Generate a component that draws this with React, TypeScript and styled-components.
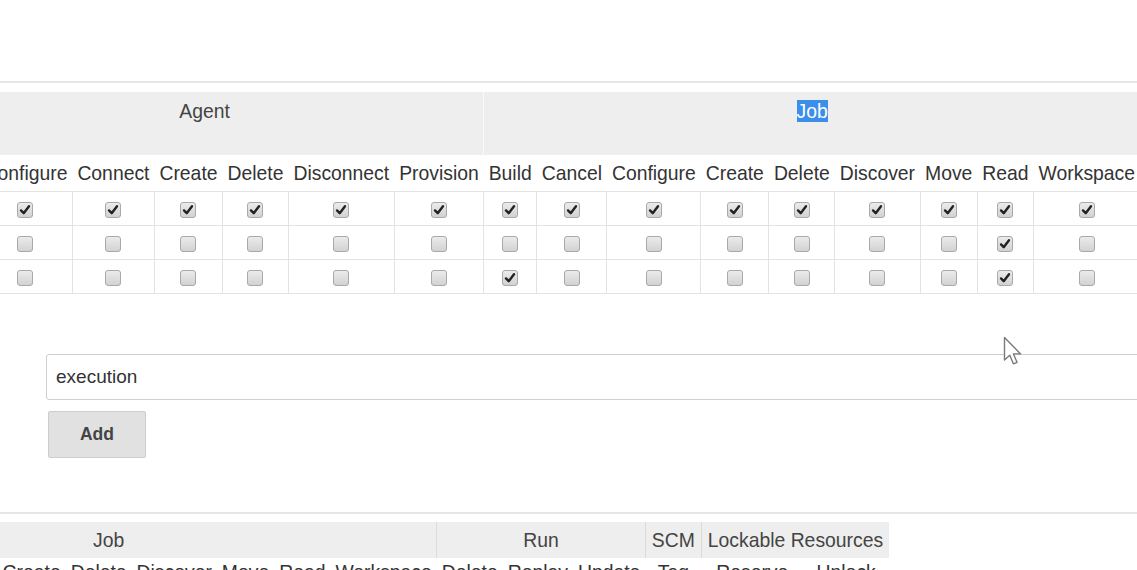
import React from 'react';
import styled, { createGlobalStyle } from 'styled-components';

const GlobalStyle = createGlobalStyle`
  html, body { margin: 0; padding: 0; background: #ffffff; }
  body {
    width: 1137px;
    height: 570px;
    overflow: hidden;
    font-family: "Liberation Sans", Arial, Helvetica, sans-serif;
    color: #333333;
  }
`;

const Page = styled.div`
  position: relative;
  width: 1137px;
  height: 570px;
  overflow: hidden;
  padding-top: 81px;
  box-sizing: border-box;
`;

const Section = styled.section<{ $pt: number }>`
  border-top: 2px solid #e6e6e6;
  padding-top: ${p => p.$pt}px;
`;

const Matrix = styled.table<{ $shift: number }>`
  border-collapse: collapse;
  margin-left: ${p => -p.$shift}px;
  font-size: 19.35px;
  line-height: 24px;
`;

const GroupCell = styled.th<{ $h: number; $top?: boolean; $sep: string }>`
  background: #eeeeee;
  height: ${p => p.$h}px;
  font-weight: normal;
  color: #444444;
  text-align: center;
  vertical-align: ${p => (p.$top ? 'top' : 'middle')};
  padding: ${p => (p.$top ? '7px 5px 0' : '0 6px')};
  border-left: 1px solid ${p => p.$sep};
  white-space: nowrap;
  box-sizing: border-box;
`;

const Selected = styled.span`
  background: #3b8eea;
  color: #ffffff;
`;

const ColHead = styled.th<{ $h: number; $top?: boolean }>`
  height: ${p => p.$h}px;
  font-weight: normal;
  color: #333333;
  text-align: center;
  vertical-align: ${p => (p.$top ? 'top' : 'middle')};
  padding: ${p => (p.$top ? '2px 5px 0' : '0 5px')};
  white-space: nowrap;
  background: #ffffff;
`;

const Cell = styled.td`
  height: 33px;
  padding: 0;
  border: 1px solid #e3e3e3;
  text-align: center;
  vertical-align: middle;
`;

const Box = styled.span`
  display: inline-flex;
  align-items: center;
  justify-content: center;
  width: 16px;
  height: 16px;
  box-sizing: border-box;
  border: 1px solid #a9a9a9;
  border-radius: 3px;
  background: linear-gradient(#ebebeb, #d2d2d2);
  vertical-align: middle;
`;

const FormBlock = styled.div`
  padding: 60px 0 54px;
`;

const TextField = styled.input`
  display: block;
  margin-left: 46px;
  width: 1200px;
  height: 46px;
  box-sizing: border-box;
  border: 1px solid #cfcfcf;
  border-radius: 3px;
  padding: 0 9px;
  font-family: "Liberation Sans", Arial, sans-serif;
  font-size: 19px;
  color: #333333;
  background: #ffffff;
  outline: none;
`;

const AddButton = styled.button`
  display: block;
  margin: 11px 0 0 48px;
  width: 98px;
  height: 47px;
  box-sizing: border-box;
  background: #e1e1e1;
  border: 1px solid #cdcdcd;
  border-radius: 2px;
  font-family: "Liberation Sans", Arial, sans-serif;
  font-weight: bold;
  font-size: 17.5px;
  color: #444444;
  padding: 0;
`;

const Pointer = styled.svg`
  position: absolute;
  left: 1003px;
  top: 336px;
`;

const Check: React.FC<{ on: boolean }> = ({ on }) => (
  <Box>
    {on && (
      <svg width="12" height="12" viewBox="0 0 12 12">
        <path d="M2 6.4 L4.7 9.2 L10 2.2" fill="none" stroke="#222222" strokeWidth="2.4" strokeLinecap="round" strokeLinejoin="round" />
      </svg>
    )}
  </Box>
);

type Group = { name: string; cols: string[]; selected?: boolean };

const topGroups: Group[] = [
  { name: 'Agent', cols: ['Build', 'Configure', 'Connect', 'Create', 'Delete', 'Disconnect', 'Provision'] },
  { name: 'Job', selected: true, cols: ['Build', 'Cancel', 'Configure', 'Create', 'Delete', 'Discover', 'Move', 'Read', 'Workspace'] },
];

const bottomGroups: Group[] = [
  { name: 'Job', cols: ['Build', 'Cancel', 'Configure', 'Create', 'Delete', 'Discover', 'Move', 'Read', 'Workspace'] },
  { name: 'Run', cols: ['Delete', 'Replay', 'Update'] },
  { name: 'SCM', cols: ['Tag'] },
  { name: 'Lockable Resources', cols: ['Reserve', 'Unlock'] },
];

// rows of checked states, in column order (Agent 7 + Job 9)
const topRows: boolean[][] = [
  Array(16).fill(true),
  [false, false, false, false, false, false, false, false, false, false, false, false, false, false, true, false],
  [false, false, false, false, false, false, false, true, false, false, false, false, false, false, true, false],
];

export default function App() {
  return (
    <>
      <GlobalStyle />
      <Page>
        <Section $pt={9}>
          <Matrix $shift={75}>
            <thead>
              <tr>
                {topGroups.map((g, i) => (
                  <GroupCell key={g.name} colSpan={g.cols.length} $h={63} $top $sep={i === 0 ? '#eeeeee' : '#fafafa'}>
                    {g.selected ? <Selected>{g.name}</Selected> : g.name}
                  </GroupCell>
                ))}
              </tr>
              <tr>
                {topGroups.flatMap(g => g.cols.map(c => <ColHead key={g.name + c} $h={36}>{c}</ColHead>))}
              </tr>
            </thead>
            <tbody>
              {topRows.map((row, r) => (
                <tr key={r}>
                  {row.map((on, c) => (
                    <Cell key={c}>
                      <Check on={on} />
                    </Cell>
                  ))}
                </tr>
              ))}
            </tbody>
          </Matrix>
        </Section>

        <FormBlock>
          <TextField defaultValue="execution" />
          <AddButton type="button">Add</AddButton>
        </FormBlock>

        <Section $pt={8}>
          <Matrix $shift={220}>
            <thead>
              <tr>
                {bottomGroups.map((g, i) => (
                  <GroupCell key={g.name} colSpan={g.cols.length} $h={36} $sep={i === 0 ? '#eeeeee' : '#dcdcdc'}>
                    {g.name}
                  </GroupCell>
                ))}
              </tr>
              <tr>
                {bottomGroups.flatMap(g => g.cols.map(c => <ColHead key={g.name + c} $h={36} $top>{c}</ColHead>))}
              </tr>
            </thead>
          </Matrix>
        </Section>

        <Pointer width="22" height="32" viewBox="0 0 22 32">
          <path
            d="M1.5 1.5 L1.5 24 L6.8 19.2 L10.4 27.8 L14 26.3 L10.5 17.9 L17.6 17.9 Z"
            fill="#ffffff"
            stroke="#7a7a7a"
            strokeWidth="1.4"
            strokeLinejoin="round"
          />
        </Pointer>
      </Page>
    </>
  );
}
